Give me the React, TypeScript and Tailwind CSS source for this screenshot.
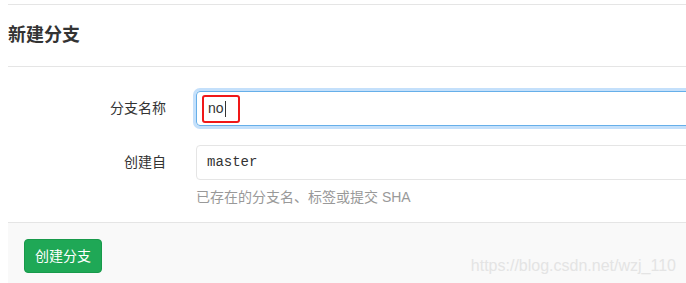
import React from 'react';

const cjk = "font-['Liberation_Sans','Noto_Sans_CJK_SC',sans-serif]";

function FormRow({ label, children }: { label: string; children: React.ReactNode }) {
  return (
    <div className="flex items-start">
      <label className="w-[158px] shrink-0 text-right text-[14px] leading-[35px] text-[#333]">{label}</label>
      <div className="ml-[30px] flex-1">{children}</div>
    </div>
  );
}

export default function App() {
  return (
    <div className={`relative h-[283px] w-[686px] overflow-hidden bg-white ${cjk}`}>
      <div className="ml-2 mt-[4px] w-[700px]">
        <div className="flex h-[63px] items-center border-y border-[#e5e5e5]">
          <h3 className="text-[18px] font-bold text-[#333]">新建分支</h3>
        </div>

        <div className="flex flex-col gap-[19px] pt-[24px]">
          <FormRow label="分支名称">
            <div className="flex h-[35px] items-center rounded-[4px] border border-[#66afe9] px-[5px] shadow-[0_0_0_3px_#c4e0fb]">
              <span className="flex h-[28px] w-[38px] items-center rounded-[3px] border-2 border-[#f01818] pl-[4px] text-[14px] text-[#333]">
                no<span className="ml-[1px] inline-block h-[16px] w-px bg-[#333]" />
              </span>
            </div>
          </FormRow>
          <FormRow label="创建自">
            <div className="flex h-[35px] items-center rounded-[4px] border border-[#e5e5e5] px-[10px] font-['Liberation_Mono',monospace] text-[14px] text-[#333]">
              master
            </div>
            <p className="mt-[9px] text-[14px] leading-[16px] text-[#999]">已存在的分支名、标签或提交 SHA</p>
          </FormRow>
        </div>

        <div className="mt-[17px] h-[70px] border-t border-[#e5e5e5] bg-[#f9f9f9] pl-4 pt-[16px]">
          <button className="h-[34px] rounded-[4px] border border-[#189a4b] bg-[#1fa856] px-[10px] text-[14px] text-white">
            创建分支
          </button>
        </div>
      </div>
      <span className="absolute right-[10px] top-[254px] font-['Liberation_Sans',sans-serif] text-[16px] text-[#e4e4e4]">
        https://blog.csdn.net/wzj_110
      </span>
    </div>
  );
}
